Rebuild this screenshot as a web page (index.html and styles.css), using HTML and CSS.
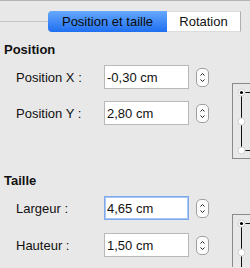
FILE: index.html
```html
<!DOCTYPE html>
<html>
<head>
<meta charset="utf-8">
<link rel="stylesheet" href="styles.css">
</head>
<body>
<div class="window">
  <div class="tabbar">
    <div class="tab-filler"></div>
    <div class="tab tab-active">Position et taille</div>
    <div class="tab">Rotation</div>
  </div>

  <section class="section">
    <h2 class="heading">Position</h2>
    <div class="section-body">
      <div class="fields">
        <div class="row">
          <span class="label">Position X :</span>
          <div class="input">-0,30 cm</div>
          <div class="spinner"><svg width="13" height="19" viewBox="0 0 13 19"><path d="M4.5 7.5 L6.5 5.5 L8.5 7.5 M4.5 11.5 L6.5 13.5 L8.5 11.5" fill="none" stroke="#222" stroke-width="1"/></svg></div>
        </div>
        <div class="row">
          <span class="label">Position Y :</span>
          <div class="input">2,80 cm</div>
          <div class="spinner"><svg width="13" height="19" viewBox="0 0 13 19"><path d="M4.5 7.5 L6.5 5.5 L8.5 7.5 M4.5 11.5 L6.5 13.5 L8.5 11.5" fill="none" stroke="#222" stroke-width="1"/></svg></div>
        </div>
      </div>
      <div class="anchor anchor-pos">
        <svg width="40" height="76" viewBox="0 0 40 76">
          <line x1="9.5" y1="10" x2="9.5" y2="68" stroke="#111" stroke-width="1"/>
          <line x1="9" y1="9.5" x2="40" y2="9.5" stroke="#111" stroke-width="1"/>
          <line x1="9" y1="67.5" x2="40" y2="67.5" stroke="#111" stroke-width="1"/>
          <circle cx="9.5" cy="9.5" r="3.5" fill="#fff" stroke="#d0d0d0"/>
          <circle cx="9.5" cy="9.5" r="1.6" fill="#000"/>
          <circle cx="9.5" cy="38.5" r="3.5" fill="#fff" stroke="#d0d0d0"/>
          <circle cx="9.5" cy="67.5" r="3.5" fill="#fff" stroke="#d0d0d0"/>
        </svg>
      </div>
    </div>
  </section>

  <section class="section section-size">
    <h2 class="heading">Taille</h2>
    <div class="section-body">
      <div class="fields fields-size">
        <div class="row">
          <span class="label">Largeur :</span>
          <div class="input input-focus">4,65 cm</div>
          <div class="spinner"><svg width="13" height="19" viewBox="0 0 13 19"><path d="M4.5 7.5 L6.5 5.5 L8.5 7.5 M4.5 11.5 L6.5 13.5 L8.5 11.5" fill="none" stroke="#222" stroke-width="1"/></svg></div>
        </div>
        <div class="row">
          <span class="label">Hauteur :</span>
          <div class="input">1,50 cm</div>
          <div class="spinner"><svg width="13" height="19" viewBox="0 0 13 19"><path d="M4.5 7.5 L6.5 5.5 L8.5 7.5 M4.5 11.5 L6.5 13.5 L8.5 11.5" fill="none" stroke="#222" stroke-width="1"/></svg></div>
        </div>
      </div>
      <div class="anchor anchor-size">
        <svg width="40" height="76" viewBox="0 0 40 76">
          <line x1="9.5" y1="10" x2="9.5" y2="76" stroke="#111" stroke-width="1"/>
          <line x1="9" y1="9.5" x2="40" y2="9.5" stroke="#111" stroke-width="1"/>
          <circle cx="9.5" cy="9.5" r="3.5" fill="#fff" stroke="#d0d0d0"/>
          <circle cx="9.5" cy="9.5" r="1.6" fill="#000"/>
          <circle cx="9.5" cy="38.5" r="3.5" fill="#fff" stroke="#d0d0d0"/>
        </svg>
      </div>
    </div>
  </section>
</div>
</body>
</html>
```

FILE: styles.css
```css
html, body {
  margin: 0;
  padding: 0;
  background: #e8e8e8;
  overflow: hidden;
}

body {
  width: 250px;
  height: 268px;
  font-family: "Liberation Sans", Arial, sans-serif;
  font-size: 13px;
  line-height: 15px;
  color: #111;
}

.window {
  border-top: 1px solid #b4b4b4;
  height: 267px;
  box-sizing: border-box;
  padding-top: 10px;
  overflow: hidden;
}

.tabbar {
  display: flex;
  align-items: center;
  height: 21px;
}

.tab-filler {
  width: 48px;
  height: 1px;
  background: #c4c4c4;
}

.tab {
  height: 21px;
  box-sizing: border-box;
  display: flex;
  align-items: center;
  justify-content: center;
  background: #fff;
  width: 74px;
  border-right: 1px solid #b0b0b0;
  border-top: 1px solid #dcdcdc;
  border-bottom: 1px solid #dcdcdc;
  color: #111;
}

.tab-active {
  width: 119px;
  border: none;
  border-radius: 4px 0 0 4px;
  background: linear-gradient(#66a8fb, #1f6ff1);
  color: #0a0a0a;
}

.section {
  padding-left: 4px;
}

.heading {
  margin: 10px 0 0 0;
  font-size: 13px;
  line-height: 15px;
  font-weight: bold;
  color: #111;
}

.section-body {
  display: flex;
  align-items: flex-start;
}

.fields {
  display: flex;
  flex-direction: column;
  gap: 12px;
  padding-top: 8px;
}

.fields-size {
  gap: 13px;
}

.row {
  display: flex;
  align-items: center;
  height: 24px;
}

.label {
  width: 100px;
  padding-left: 12px;
  box-sizing: border-box;
}

.input {
  width: 85px;
  height: 24px;
  box-sizing: border-box;
  background: #fff;
  border: 1px solid #b8b8b8;
  padding-left: 2px;
  display: flex;
  align-items: center;
  color: #111;
}

.input-focus {
  border: 1px solid #7ea9ea;
  box-shadow: inset 0 0 0 1px #a8c7f4;
}

.spinner {
  width: 13px;
  height: 19px;
  box-sizing: border-box;
  margin-left: 7px;
  border: 1px solid #a0a0a0;
  border-radius: 5px;
  background: #fbfbfb;
  position: relative;
}

.spinner svg {
  position: absolute;
  left: -1px;
  top: -1px;
}

.anchor {
  margin-left: 23px;
  width: 40px;
  height: 76px;
  box-sizing: border-box;
  border: 1px solid #8a8a8a;
  border-right: none;
  overflow: hidden;
}

.anchor svg {
  display: block;
  margin: -1px 0 0 -1px;
}

.anchor-pos {
  margin-top: 26px;
  margin-bottom: -34px;
}

.anchor-size {
  margin-top: 26px;
  height: 60px;
  margin-bottom: -60px;
  border-bottom: none;
}

.section-size .heading {
  margin-top: 48px;
}
```
